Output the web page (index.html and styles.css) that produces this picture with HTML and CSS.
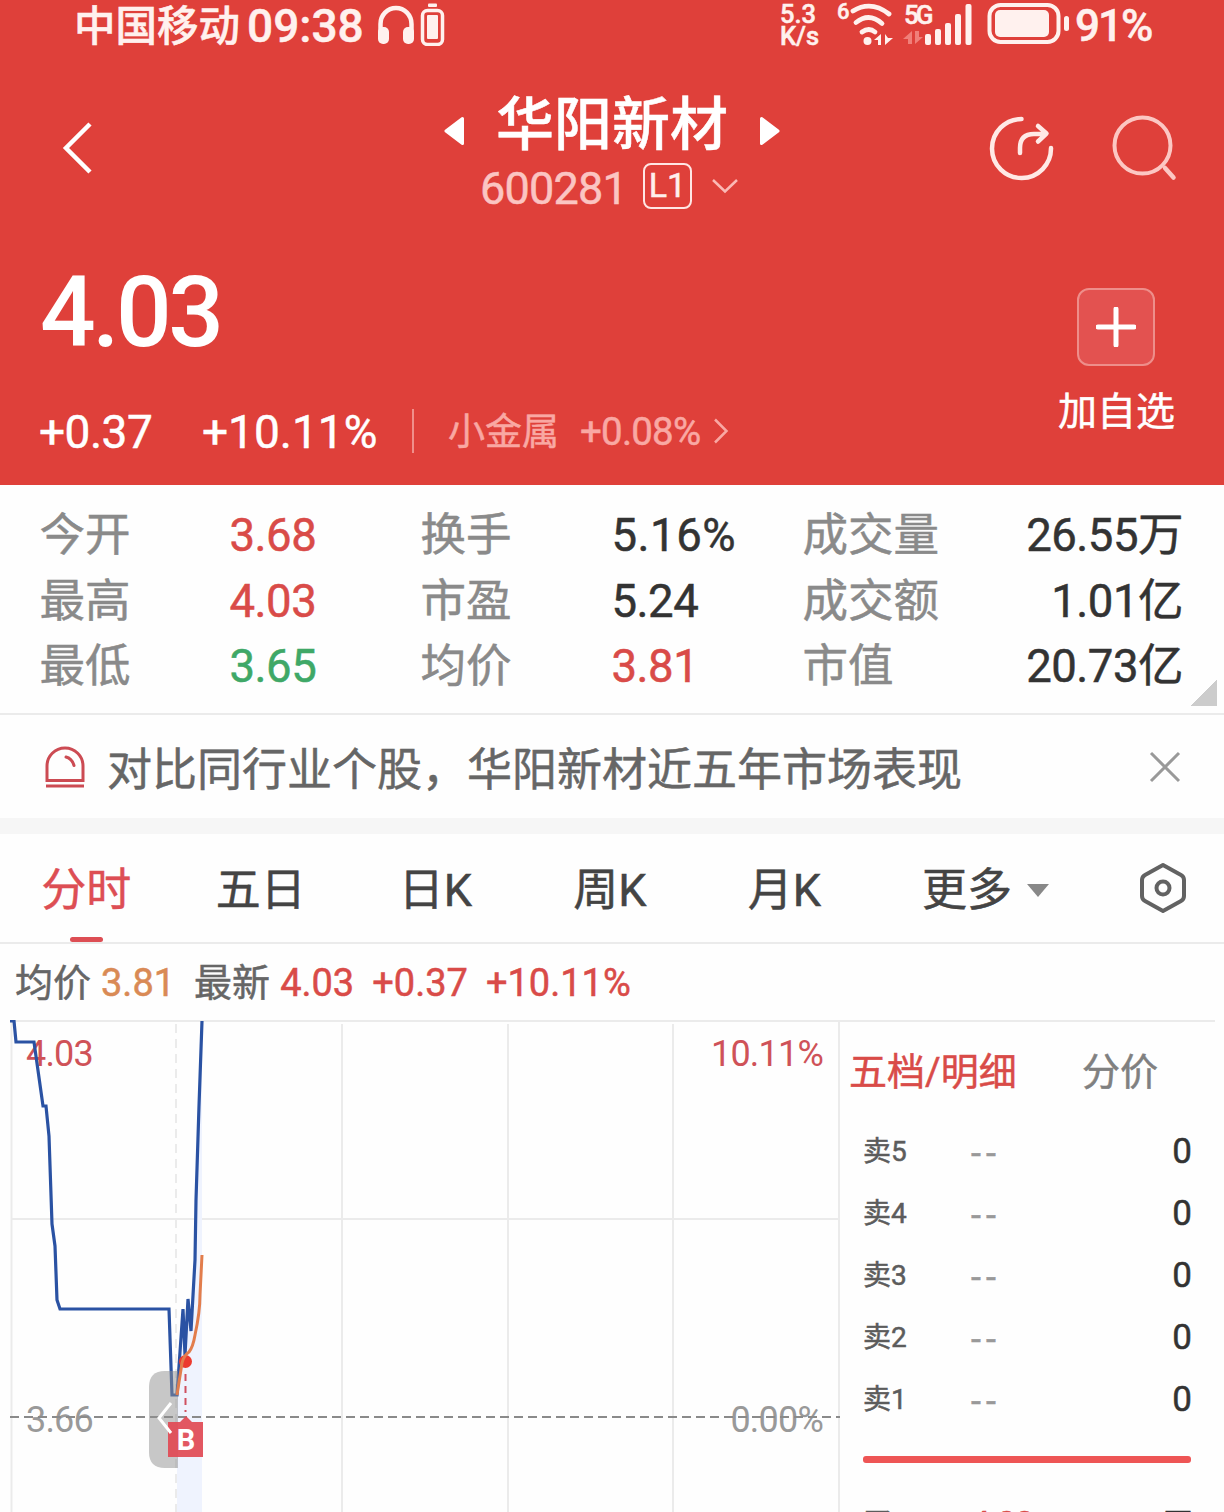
FILE: index.html
```html
<!DOCTYPE html>
<html lang="zh-CN">
<head>
  <meta charset="UTF-8" />
  <meta name="viewport" content="width=device-width, initial-scale=1.0"/>
  <title>华阳新材 600281</title>
  <link rel="stylesheet" href="styles.css">
</head>
<body>
  <header>
    <div class="status-bar">
      <span class="carrier">中国移动</span>
      <span class="clock">09:38</span>
      <svg class="headphone" width="70" height="44" viewBox="0 0 70 44">
        <path d="M3.500 32V22a15.500 16 0 0 1 31 0v10" fill="none" stroke="#fff1ee" stroke-width="4.500"/>
        <rect x="1" y="25" width="11" height="17" rx="5" fill="#fff1ee"/>
        <rect x="26" y="25" width="11" height="17" rx="5" fill="#fff1ee"/>
        <rect x="45.500" y="8.500" width="20" height="34" rx="5" fill="none" stroke="#fff1ee" stroke-width="3.500"/>
        <rect x="50" y="13" width="11" height="24" rx="1" fill="#fff1ee"/>
        <rect x="51" y="1.500" width="9" height="3.500" rx="1" fill="#fff1ee"/>
      </svg>
      <div class="net-speed"><span>5.3</span><span>K/s</span></div>
      <svg class="signals" width="250" height="46" viewBox="0 0 250 46">
        <text class="tiny" x="-1" y="19">6</text>
        <g fill="none" stroke="#fff1ee" stroke-width="4.800" stroke-linecap="round">
          <path d="M15 11Q33 0 51 14"/>
          <path d="M18 22.500Q31 12 44 23.500"/>
          <path d="M24 32Q31 27 37 32"/>
        </g>
        <circle cx="29.500" cy="41" r="4" fill="#fff1ee"/>
        <path d="M43 34v11h-3v-5h-4zM47 34v11l8-7h-5z" fill="#fff1ee"/>
        <text class="small" x="66" y="24">5G</text>
        <path d="M74 31v13h-4v-5h-5zM77 31v13l8-7h-4v-6z" fill="#f07f79"/>
        <g fill="#fff1ee">
          <rect x="87" y="34" width="6" height="11" rx="2"/>
          <rect x="97" y="29" width="6" height="16" rx="2"/>
          <rect x="107" y="23" width="6" height="22" rx="2"/>
          <rect x="117" y="14" width="6" height="31" rx="2"/>
          <rect x="127.500" y="4" width="6" height="41" rx="2"/>
        </g>
        <rect x="151.500" y="5" width="69" height="37" rx="11" fill="none" stroke="#fff1ee" stroke-width="4"/>
        <rect x="157" y="10" width="54" height="27" rx="5" fill="#fff1ee"/>
        <rect x="226" y="16" width="5" height="15" rx="2.500" fill="#fff1ee"/>
      </svg>
      <span class="battery">91%</span>
    </div>

    <nav class="title-bar">
      <svg class="back" width="32" height="54" viewBox="0 0 32 54"><path d="M28 3L4 27l24 24" fill="none" stroke="#fff" stroke-width="4.500"/></svg>
      <div class="stock">
        <div class="stock-name">
          <svg width="21" height="30" viewBox="0 0 21 30"><path d="M18.500 2.500L2 15l16.500 12.500z" fill="#fff" stroke="#fff" stroke-width="3" stroke-linejoin="round"/></svg>
          <h1>华阳新材</h1>
          <svg width="21" height="30" viewBox="0 0 21 30"><path d="M2.500 2.500L19 15L2.500 27.500z" fill="#fff" stroke="#fff" stroke-width="3" stroke-linejoin="round"/></svg>
        </div>
        <div class="stock-code">
          <span>600281</span>
          <span class="level">L1</span>
          <svg width="26" height="16" viewBox="0 0 26 16"><path d="M1 2l12 11.500L25 2" fill="none" stroke="#fbb9b5" stroke-width="2.500"/></svg>
        </div>
      </div>
      <div class="actions">
        <svg width="66" height="66" viewBox="0 0 66 66" fill="none" stroke="#ffe9e6" stroke-width="4.500" stroke-linecap="round" stroke-linejoin="round">
          <path d="M32.500 4A29.500 29.500 0 1 0 62 33"/>
          <path d="M31 38v-5q0-14 14-14h12M49 11l8.500 7.500L49 26.500"/>
        </svg>
        <svg width="66" height="66" viewBox="0 0 66 66" fill="none" stroke="#fcc7c3" stroke-width="4" stroke-linecap="round">
          <circle cx="30.500" cy="30.500" r="28"/>
          <path d="M53 53l8.500 9.500" stroke-width="4.500"/>
        </svg>
      </div>
    </nav>

    <div class="quote">
      <div class="quote-left">
        <div class="price">4.03</div>
        <div class="changes">
          <span class="diff">+0.37</span>
          <span class="percent">+10.11%</span>
          <span class="industry">小金属</span>
          <span class="industry-rate">+0.08%</span>
          <svg width="16" height="26" viewBox="0 0 16 26"><path d="M2 1.500L13.500 13L2 24.500" fill="none" stroke="#f9a8a3" stroke-width="2.500"/></svg>
        </div>
      </div>
      <div class="add">
        <div class="add-btn">
          <svg width="40" height="40" viewBox="0 0 40 40"><path d="M20 2v36M2 20h36" stroke="#fff" stroke-width="5" stroke-linecap="round"/></svg>
        </div>
        <div class="add-text">加自选</div>
      </div>
    </div>
  </header>

  <section class="stats">
    <span>今开</span><b class="up">3.68</b><span>换手</span><b class="wide">5.16%</b><span>成交量</span><b class="right">26.55万</b>
    <span>最高</span><b class="up">4.03</b><span>市盈</span><b>5.24</b><span>成交额</span><b class="right">1.01亿</b>
    <span>最低</span><b class="down">3.65</b><span>均价</span><b class="up">3.81</b><span>市值</span><b class="right">20.73亿</b>
    <i class="corner"></i>
  </section>

  <section class="notice">
    <svg width="40" height="42" viewBox="0 0 40 42" fill="none" stroke="#cc4b53" stroke-width="3">
      <path d="M2 34.500V20a18 18 0 0 1 36 0v14.500z"/>
      <path d="M1 40h38"/>
      <path d="M21 11q6 1.500 8 8.500" stroke-linecap="round"/>
    </svg>
    <p>对比同行业个股，华阳新材近五年市场表现</p>
    <svg width="32" height="32" viewBox="0 0 32 32"><path d="M2 2l28 28M30 2L2 30" stroke="#999" stroke-width="3"/></svg>
  </section>

  <div class="tabs">
    <a class="active">分时</a>
    <a>五日</a>
    <a>日K</a>
    <a>周K</a>
    <a>月K</a>
    <a class="more">更多<i></i></a>
    <svg width="50" height="52" viewBox="0 0 50 52" fill="none" stroke="#626262" stroke-width="4" stroke-linejoin="round">
      <path d="M25 3l18 10q3 1.700 3 5v16q0 3.300-3 5L25 49L7 39q-3-1.700-3-5V18q0-3.300 3-5z"/>
      <circle cx="25" cy="26" r="6.500"/>
    </svg>
  </div>

  <div class="legend">
    <span>均价</span><span class="avg">3.81</span>
    <span class="latest">最新</span><span class="up">4.03</span><span class="up gap">+0.37</span><span class="up gap">+10.11%</span>
  </div>

  <main>
    <svg class="chart" width="840" height="493" viewBox="0 0 840 493">
      <!-- grid -->
      <g stroke="#ebebeb" stroke-width="2">
        <path d="M10 1H840M11 199H840"/>
        <path d="M11.500 1V493M342 4V493M508 4V493M673 4V493M839 1V493"/>
        <path d="M176 4V493" stroke-dasharray="9 6"/>
      </g>
      <path d="M177 375L183 289L191 311L195 240L202 1V493H177z" fill="#eff3fe"/>
      <text class="red" x="26" y="46">4.03</text>
      <text class="red" x="823" y="46" text-anchor="end">10.11%</text>
      <text class="gray" x="26" y="412">3.66</text>
      <text class="gray" x="823" y="412" text-anchor="end">0.00%</text>
      <path d="M10 397H840" stroke="#8a8a8a" stroke-width="2" stroke-dasharray="9 5"/>
      <!-- price -->
      <path d="M10 1H14L16 22H34L43 86H46L49 116L52 204L55 226L57 280L60 289H169L172 375H177L183 289L185 335L188 279L191 311L195 240L196 180L199 86L202 1" fill="none" stroke="#2a52a3" stroke-width="3.200"/>
      <!-- collapse handle -->
      <path d="M178 351h-13q-16 0-16 16v65q0 16 16 16h13z" fill="#8f8f8f" fill-opacity=".5"/>
      <circle cx="185.500" cy="341.500" r="6.500" fill="#ec3a2f"/>
      <path d="M177 375l5-32q2-8 7-11q4-5 6-17q5-23 5-40l2-40" fill="none" stroke="#e27d4c" stroke-width="3"/>
      <path d="M185.500 354v38" stroke="#cf5060" stroke-width="2" stroke-dasharray="7 5"/>
      <!-- buy marker -->
      <path d="M168 402h12l6-6l6 6h11v35h-35z" fill="#e14a55" fill-opacity=".93"/>
      <text class="marker" x="185.500" y="430" text-anchor="middle">B</text>
      <path d="M171 383l-12 15l12 15" fill="none" stroke="#fff" stroke-width="3"/>
    </svg>

    <aside>
      <div class="book-tabs"><span class="up">五档/明细</span><span>分价</span></div>
      <div class="order"><span>卖5</span><em>--</em><b>0</b></div>
      <div class="order"><span>卖4</span><em>--</em><b>0</b></div>
      <div class="order"><span>卖3</span><em>--</em><b>0</b></div>
      <div class="order"><span>卖2</span><em>--</em><b>0</b></div>
      <div class="order"><span>卖1</span><em>--</em><b>0</b></div>
      <div class="ratio"></div>
      <div class="order buy"><span>买1</span><em class="up">4.03</em><b>万</b></div>
    </aside>
  </main>
</body>
</html>
```

FILE: styles.css
```css
* {
  box-sizing: border-box;
}
body {
  font-family: Roboto, "Noto Sans CJK SC", sans-serif;
  margin: 0;
  height: 1512px;
  overflow: hidden;
  background: #fefefe;
  color: #333;
  -webkit-text-stroke: 0.5px;
}
svg {
  display: block;
  flex: none;
}
b {
  font-weight: 400;
}
header {
  height: 485px;
  background: #df403a;
  color: #fff;
}
.status-bar {
  display: flex;
  align-items: center;
  height: 52px;
  padding-left: 74px;
  color: #fff1ee;
  font-weight: 500;
  white-space: nowrap;
}
.carrier {
  width: 173px;
  margin-top: -6px;
  font-size: 41.5px;
}
.clock {
  width: 130px;
  font-size: 46px;
}
.net-speed {
  width: 58px;
  margin: -3px 0 0 333px;
  font-size: 25.5px;
  line-height: 22px;
}
.net-speed span {
  display: block;
}
.headphone {
  margin-top: -4px;
}
.signals {
  margin-top: -6px;
  margin-right: -13px;
  overflow: visible;
}
.signals text {
  fill: #fff1ee;
  stroke: #fff1ee;
  stroke-width: 0.5px;
  font-weight: 500;
}
.tiny {
  font-size: 22px;
}
.signals .small {
  font-size: 26px;
  letter-spacing: -3px;
}
.battery {
  font-size: 44px;
  letter-spacing: -2px;
}
.title-bar {
  display: grid;
  grid-template-columns: 1fr 340px 1fr;
  height: 170px;
}
.back {
  margin: 69px 0 0 62px;
}
.stock-name {
  display: flex;
  align-items: center;
  justify-content: space-between;
  height: 78px;
  margin-top: 35px;
  padding: 0 2px 0 2px;
}
.stock-name svg {
  margin-top: 10px;
}
h1 {
  margin: -3px 0 0;
  font-size: 58px;
  font-weight: 500;
  line-height: 78px;
}
.stock-code {
  display: flex;
  align-items: center;
  height: 46px;
  margin: -2px 0 0 38px;
  color: #fbc5c2;
  font-size: 45px;
}
.stock-code span:first-child {
  width: 163px;
  margin-top: 4px;
  letter-spacing: -0.8px;
}
.stock-code .level {
  width: 49px;
  height: 46px;
  margin-right: 20px;
  border: 2.5px solid #ffe6e4;
  border-radius: 8px;
  color: #ffefed;
  font-size: 34px;
  line-height: 41px;
  text-align: center;
}
.actions {
  display: flex;
  justify-content: flex-end;
  gap: 57px;
  padding: 63px 46px 0 0;
}
.quote {
  display: flex;
  justify-content: space-between;
}
.price {
  height: 120px;
  margin: 31px 0 0 40px;
  font-size: 98px;
  font-weight: 500;
  line-height: 120px;
  letter-spacing: -3.5px;
  -webkit-text-stroke: 0;
}
.changes {
  display: flex;
  align-items: center;
  height: 44px;
  margin: 36px 0 0 39px;
  font-size: 46px;
}
.diff {
  width: 163px;
  line-height: 47px;
  margin-top: 2px;
  letter-spacing: -0.5px;
}
.percent {
  width: 212px;
  height: 44px;
  line-height: 47px;
  border-right: 2px solid #f08f8a;
}
.industry {
  width: 132px;
  margin: -4px 0 0 34px;
  color: #f9a8a3;
  font-size: 37px;
}
.industry-rate {
  width: 133px;
  color: #f9a8a3;
  font-size: 38.5px;
  letter-spacing: -0.8px;
}
.add {
  width: 118px;
  margin: 66px 49px 0 0;
}
.add-btn {
  display: flex;
  align-items: center;
  justify-content: center;
  width: 78px;
  height: 78px;
  margin-left: 20px;
  border: 2px solid #ee8e8a;
  border-radius: 12px;
  background: #e35250;
}
.add-text {
  margin: 20px 0 0 1px;
  font-size: 39px;
  line-height: 52px;
  white-space: nowrap;
}
.up {
  color: #d94b48;
}
.down {
  color: #3fa867;
}
.stats {
  position: relative;
  display: grid;
  grid-template-columns: 190px 191px 191px 191px 140px 1fr;
  grid-auto-rows: 65.5px;
  height: 230px;
  padding: 18px 41px 0 39.5px;
  border-bottom: 2px solid #ebebeb;
  font-size: 45.5px;
  line-height: 65.5px;
  white-space: nowrap;
}
.stats span {
  color: #8a8a8a;
}
.stats b {
  letter-spacing: -0.5px;
}
.stats .wide {
  letter-spacing: 0.5px;
}
.right {
  text-align: right;
}
.corner {
  position: absolute;
  right: 7px;
  bottom: 7px;
  width: 26px;
  height: 26px;
  background: linear-gradient(135deg, transparent 50%, #ccc 50%);
}
.notice {
  display: flex;
  align-items: center;
  height: 103px;
  padding: 0 43px 0 45px;
}
.notice p {
  flex: 1;
  margin: 8px 0 0 22px;
  color: #666;
  font-size: 45px;
  line-height: 60px;
}
.tabs {
  display: flex;
  align-items: center;
  height: 126px;
  border-top: 16px solid #f6f6f6;
  border-bottom: 2px solid #ebebeb;
  color: #444;
  font-size: 45px;
}
.tabs a {
  position: relative;
  left: -1px;
  flex: 0 0 174.5px;
  line-height: 112px;
  text-align: center;
  margin-top: 5px;
}
.tabs .active {
  color: #dd4e54;
}
.active::after {
  content: "";
  position: absolute;
  left: 71px;
  bottom: 5px;
  width: 33px;
  height: 5px;
  border-radius: 3px;
  background: #dd4e54;
}
.tabs .more {
  flex-basis: 228px;
  margin-right: 37px;
}
.more i {
  display: inline-block;
  margin-left: 15px;
  border: 11px solid transparent;
  border-top: 13px solid #888;
  border-bottom: 0;
  vertical-align: 9px;
}
.legend {
  display: flex;
  height: 76px;
  padding-left: 15px;
  color: #666;
  font-size: 38px;
  line-height: 78px;
}
.avg {
  margin-left: 10px;
  color: #d98a55;
}
.latest {
  margin: 0 10px 0 19px;
}
.gap {
  margin-left: 18px;
}
main {
  display: flex;
}
.chart text {
  font-size: 36px;
  letter-spacing: -0.8px;
  stroke-width: 0.4px;
  -webkit-text-stroke: 0;
}
.chart .red {
  fill: #cf5258;
}
.chart .gray {
  fill: #999;
}
.chart .marker {
  fill: #fff;
  font-size: 29px;
  font-weight: 700;
}
aside {
  width: 375px;
  border-top: 2px solid #ebebeb;
}
.book-tabs {
  display: flex;
  justify-content: space-between;
  height: 98px;
  padding: 0 57px 0 9px;
  color: #808080;
  font-size: 38px;
  line-height: 101px;
}
.book-tabs .up {
  color: #d94b48;
}
.order {
  display: flex;
  height: 62px;
  padding: 0 23px;
  line-height: 64px;
}
.order span {
  width: 108px;
  color: #5c5c5c;
  font-size: 28px;
}
.order em {
  flex: 1;
  color: #999;
  font-size: 36px;
  font-style: normal;
  line-height: 68px;
  letter-spacing: 5px;
}
.order b {
  font-size: 35px;
}
.ratio {
  height: 7px;
  margin: 26px 24px 0 23px;
  border-radius: 3px;
  background: #ee5555;
}
.order.buy {
  margin-top: 29px;
}
.buy em.up {
  color: #d94b48;
  font-size: 34px;
  line-height: 62px;
  letter-spacing: -1px;
}
.buy b {
  font-size: 28px;
}
```
